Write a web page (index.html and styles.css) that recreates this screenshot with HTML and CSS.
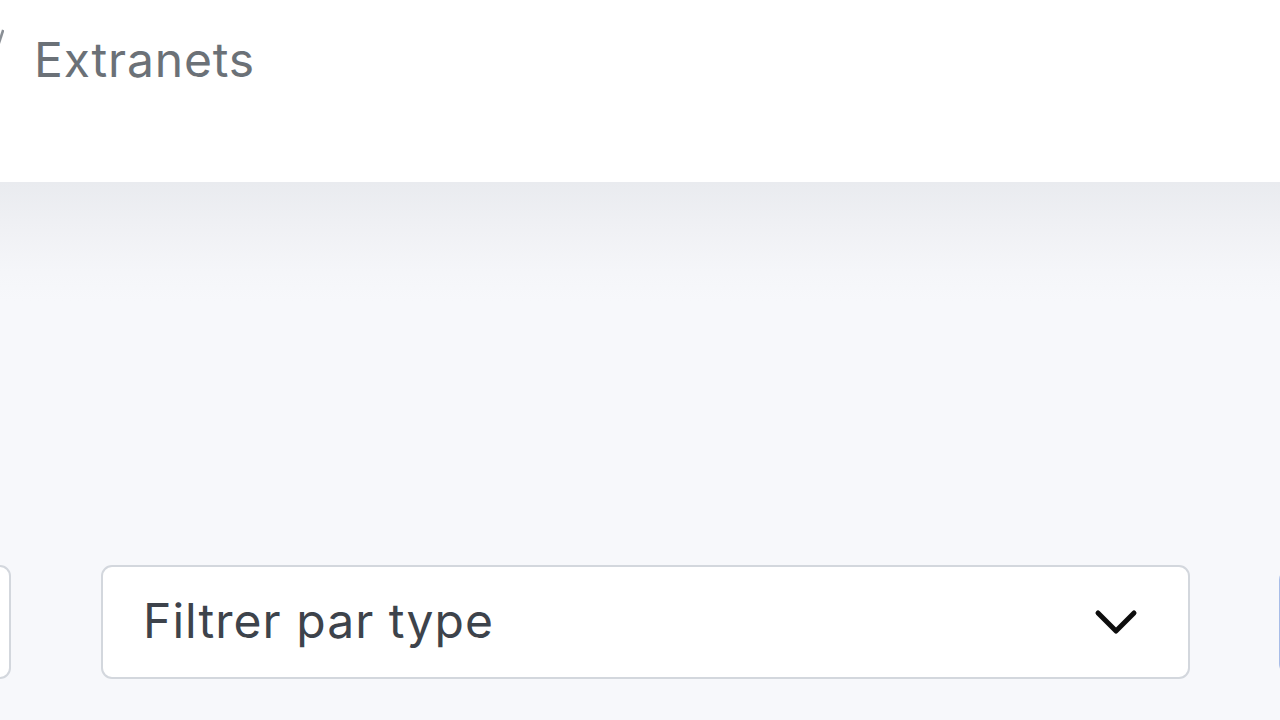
FILE: index.html
```html
<!DOCTYPE html>
<html lang="fr">
<head>
<meta charset="utf-8">
<title>Extranets</title>
<link rel="stylesheet" href="styles.css">
</head>
<body>
  <header class="topbar">
    <nav class="breadcrumb">
      <svg class="crumb-sep" width="4" height="60" viewBox="0 0 4 60" aria-hidden="true">
        <line x1="3.2" y1="30" x2="-4" y2="52" stroke="#8a8f95" stroke-width="2.6"/>
      </svg>
      <span class="crumb-current">Extranets</span>
    </nav>
  </header>
  <main class="content">
    <div class="filters">
      <div class="field field-search"></div>
      <div class="field field-select">
        <span class="select-label">Filtrer par type</span>
        <svg class="chevron" width="44" height="28" viewBox="0 0 44 28" aria-hidden="true">
          <path d="M4 4 L22 22 L40 4" fill="none" stroke="#0d0d0d" stroke-width="5" stroke-linecap="round" stroke-linejoin="round"/>
        </svg>
      </div>
      <div class="field field-button"></div>
    </div>
  </main>
</body>
</html>
```
FILE: styles.css
```css
* { box-sizing: border-box; }
html, body { margin: 0; padding: 0; }
body {
  width: 1280px;
  height: 720px;
  overflow: hidden;
  font-family: Inter, "Noto Sans", "Liberation Sans", sans-serif;
  background: #f7f8fb;
  display: flex;
  flex-direction: column;
}
.topbar {
  height: 182px;
  background: #ffffff;
  flex: none;
}
.breadcrumb {
  display: flex;
  align-items: flex-start;
  gap: 30px;
  padding-top: 0;
}
.crumb-sep {
  display: block;
  flex: none;
}
.crumb-current {
  margin-top: 30px;
  font-size: 48px;
  line-height: 60px;
  color: #6b7177;
  letter-spacing: 0.8px;
}
.content {
  flex: 1;
  background: linear-gradient(#e9ebef 0, #eff0f4 40px, #f5f6f9 90px, #f7f8fb 120px, #f7f8fb 100%);
  padding-top: 383px;
}
.filters {
  display: flex;
  gap: 89px;
  margin-left: -289px;
  height: 114px;
}
.field {
  flex: none;
  height: 114px;
  background: #ffffff;
  border: 2px solid #d3d7dd;
  border-radius: 11px;
}
.field-search {
  width: 300px;
  margin-right: 1px;
}
.field-select {
  width: 1089px;
  display: flex;
  align-items: center;
  justify-content: space-between;
  padding: 0 50px 0 40px;
}
.select-label {
  font-size: 48px;
  color: #3d434b;
  letter-spacing: 1.05px;
  margin-top: -4px;
}
.chevron {
  display: block;
  margin-top: 2px;
}
.field-button {
  width: 200px;
  height: 106px;
  margin-top: 4px;
  border-color: #a8bde8;
  background: #f7f8fb;
}
```
